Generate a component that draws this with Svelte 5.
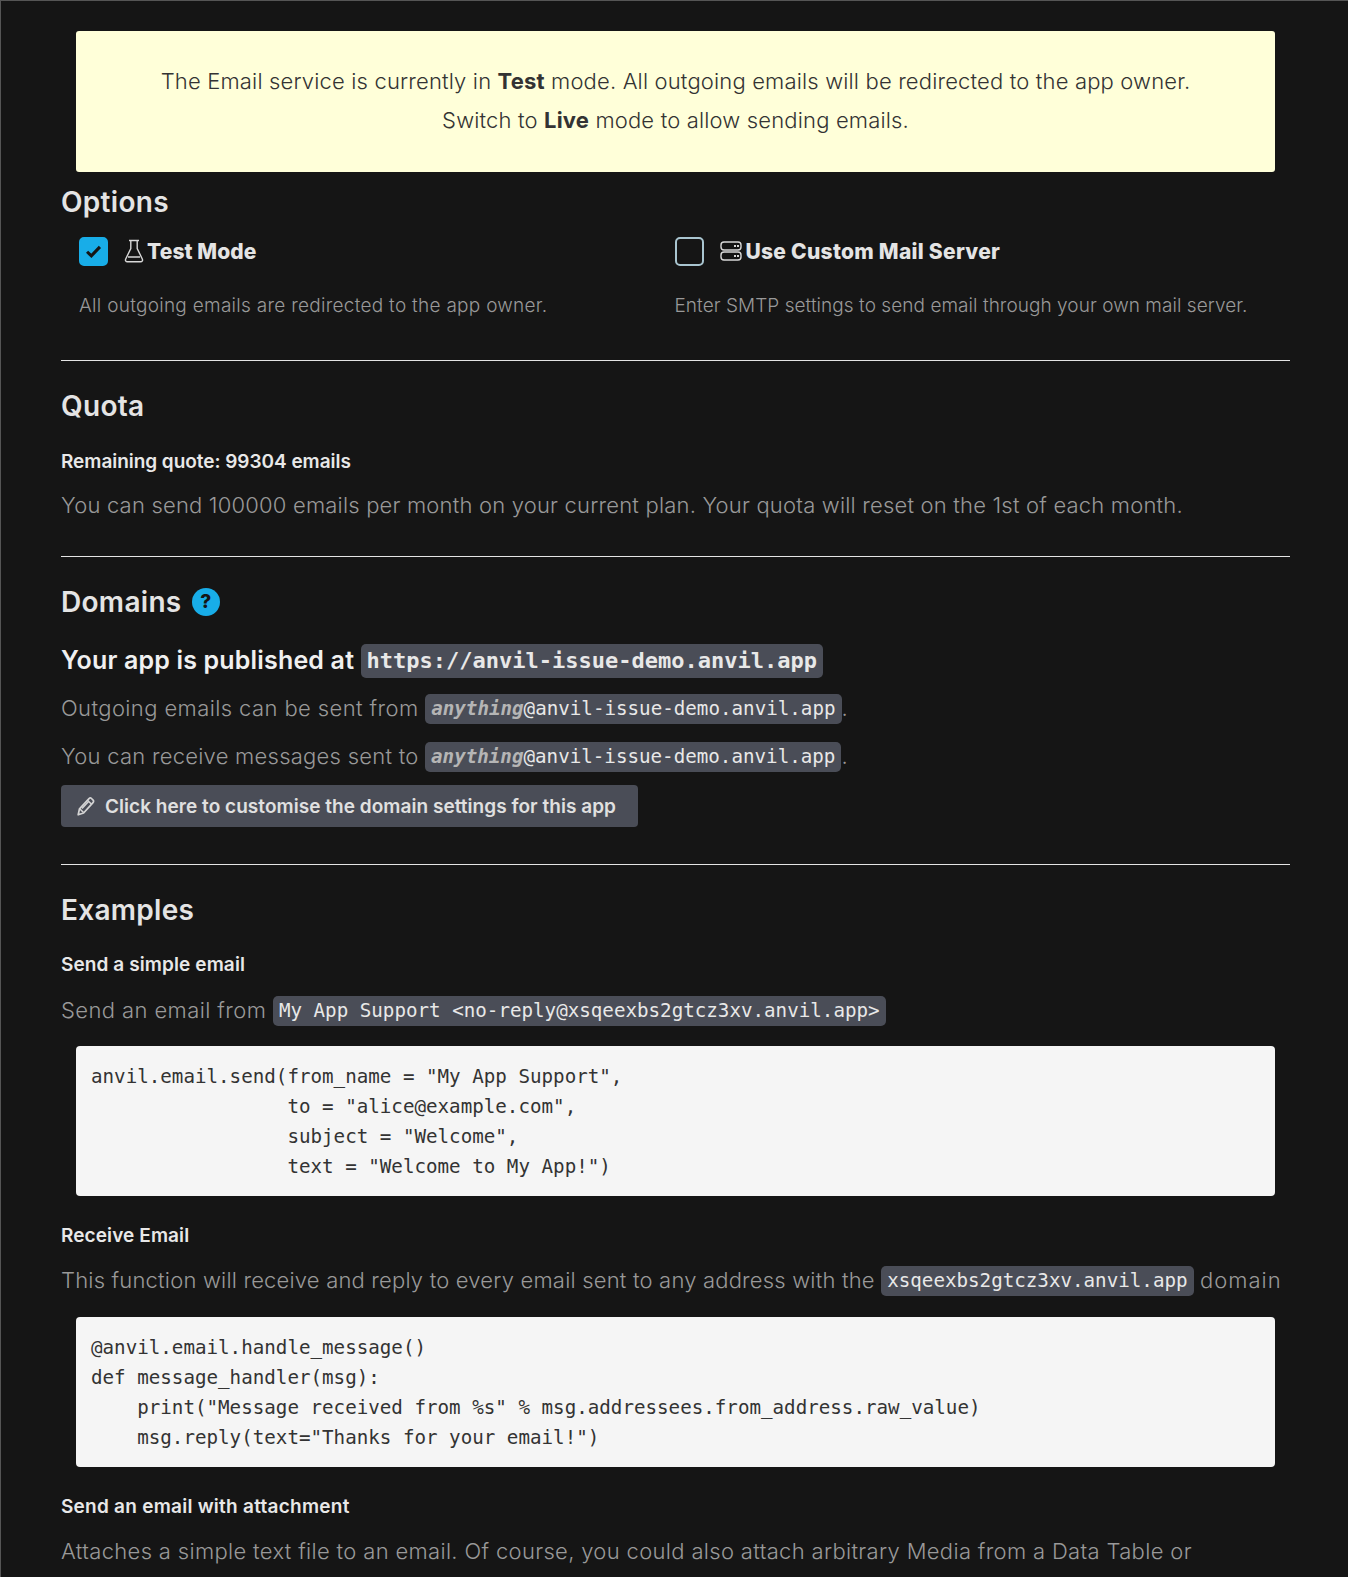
<script>
  let testMode = true;
  let customServer = false;
  const sendCode = `anvil.email.send(from_name = "My App Support",
                 to = "alice@example.com",
                 subject = "Welcome",
                 text = "Welcome to My App!")`;
  const receiveCode = `@anvil.email.handle_message()
def message_handler(msg):
    print("Message received from %s" % msg.addressees.from_address.raw_value)
    msg.reply(text="Thanks for your email!")`;
</script>

<main>
  <div class="alert">
    <p>The Email service is currently in <b>Test</b> mode. All outgoing emails will be redirected to the app owner.</p>
    <p>Switch to <b>Live</b> mode to allow sending emails.</p>
  </div>

  <section class="options">
    <h2 class="first">Options</h2>
    <div class="cols">
      <div class="col">
        <div class="opt">
          <span class="box" class:on={testMode}>
            <svg width="19" height="19" viewBox="0 0 16 16"><path d="M2.6 8.2l3.6 3.5 7.2-7.6" fill="none" stroke="#151515" stroke-width="2.6"/></svg>
          </span>
          <svg class="ic flask" width="20" height="24" viewBox="0 0 20 24"><path d="M5 1.5h10M6.8 1.5v8L1.7 20c-.7 1.5.1 2.8 1.7 2.800h13.200c1.600 0 2.400-1.300 1.700-2.800L13.200 9.500v-8M4 18h12" fill="none" stroke="#d8d8d8" stroke-width="1.4"/></svg>
          <span class="optname test">Test Mode</span>
        </div>
        <p class="desc wide">All outgoing emails are redirected to the app owner.</p>
      </div>
      <div class="col">
        <div class="opt">
          <span class="box" class:on={customServer}></span>
          <svg class="ic server" width="22" height="20" viewBox="0 0 22 20"><g fill="none" stroke="#d8d8d8" stroke-width="1.4"><rect x="1" y="1" width="20" height="8" rx="3"/><rect x="1" y="11" width="20" height="8" rx="3"/></g><path d="M14 4h2v2h-2zM17 4h2v2h-2zM14 14h2v2h-2zM17 14h2v2h-2z" fill="#d8d8d8"/></svg>
          <span class="optname">Use Custom Mail Server</span>
        </div>
        <p class="desc">Enter SMTP settings to send email through your own mail server.</p>
      </div>
    </div>
  </section>

  <hr />

  <section>
    <h2>Quota</h2>
    <h4 class="remaining">Remaining quote: 99304 emails</h4>
    <p class="txt quota">You can send 100000 emails per month on your current plan. Your quota will reset on the 1st of each month.</p>
  </section>

  <hr class="h2" />

  <section>
    <h2>Domains <span class="help">?</span></h2>
    <h3>Your app is published at <code class="big">https://anvil-issue-demo.anvil.app</code></h3>
    <p class="txt out">Outgoing emails can be sent from <code><i>anything</i>@anvil-issue-demo.anvil.app</code>.</p>
    <p class="txt recv">You can receive messages sent to <code><i>anything</i>@anvil-issue-demo.anvil.app</code>.</p>
    <button>
      <svg width="18" height="20" viewBox="0 0 18 20"><path d="M1.200 18.800l1.300-6L12 2.600c.8-.8 1.800-.8 2.500-.1l1.600 1.600c.7.700.7 1.700-.1 2.500L6.600 17z" fill="none" stroke="#d4d4d4" stroke-width="1.700" stroke-linejoin="round"/><path d="M10.500 4.200l4.300 4.300M3 13l3.500 3.500M5 12.500l7-7.500" fill="none" stroke="#d4d4d4" stroke-width="1.500"/></svg>
      <span>Click here to customise the domain settings for this app</span>
    </button>
  </section>

  <hr class="h3" />

  <section>
    <h2>Examples</h2>
    <h4 class="simple">Send a simple email</h4>
    <p class="txt from">Send an email from <code>My App Support &lt;no-reply@xsqeexbs2gtcz3xv.anvil.app&gt;</code></p>
    <pre>{sendCode}</pre>
    <h4 class="after">Receive Email</h4>
    <p class="txt fn">This function will receive and reply to every email sent to any address with the <code>xsqeexbs2gtcz3xv.anvil.app</code> <span class="dom">domain</span></p>
    <pre class="second">{receiveCode}</pre>
    <h4 class="after attach">Send an email with attachment</h4>
    <p class="txt last">Attaches a simple text file to an email. Of course, you could also attach arbitrary Media from a Data Table or</p>
  </section>
</main>

<style>
  :global(body) {
    background: #151515;
    font-family: Inter, "Open Sans", sans-serif;
  }
  main {
    box-sizing: border-box;
    height: 1577px;
    overflow: hidden;
    padding: 30px 58px 0 60px;
    border-top: 1px solid #555;
    border-left: 1px solid #555;
    background: #151515;
  }
  .alert {
    margin: 0 15px;
    height: 141px;
    box-sizing: border-box;
    padding: 31px 15px 0;
    background: #ffffd9;
    border-radius: 3px;
    color: #333;
    text-align: center;
    font-size: 22px;
    font-weight: 300;
    letter-spacing: .16px;
    line-height: 39px;
  }
  .alert p { margin: 0; }
  .alert b { font-weight: 700; }
  h2 {
    margin: 0;
    color: #e4e4e4;
    font-size: 28px;
    font-weight: 600;
    letter-spacing: .3px;
    line-height: 36px;
  }
  h2.first { margin-top: 12px; }
  .cols { display: flex; }
  .col { width: 50%; padding-left: 18px; box-sizing: border-box; }
  .col + .col { padding-left: 0; margin-left: -1px; }
  .opt {
    display: flex;
    align-items: center;
    height: 30px;
    margin-top: 16px;
  }
  .box {
    box-sizing: border-box;
    width: 29px;
    height: 29px;
    border: 2px solid #a9c5d0;
    border-radius: 5px;
    display: flex;
    align-items: center;
    justify-content: center;
  }
  .box.on { background: #18ade8; border-color: #18ade8; }
  .ic { margin-left: 16px; margin-right: 4px; }
  .optname {
    color: #e4e4e4;
    font-size: 21px;
    font-weight: 800;
    letter-spacing: .27px;
  }
  .optname.test { letter-spacing: .1px; margin-left: -1px; }
  .desc {
    margin: 26px 0 0;
    color: #999;
    font-size: 19px;
    font-weight: 300;
    letter-spacing: .05px;
    line-height: 28px;
    white-space: nowrap;
  }
  .desc.wide { letter-spacing: .28px; }
  hr {
    border: 0;
    border-top: 1px solid #e4e4e4;
    margin: 40px 0 0;
  }
  hr.h2 { margin-top: 35px; }
  hr.h3 { margin-top: 37px; }
  section h2:not(.first) { margin-top: 27px; }
  h4 {
    margin: 0;
    color: #e8e8e8;
    font-size: 19px;
    font-weight: 600;
    letter-spacing: .1px;
    line-height: 30px;
  }
  h4.remaining { margin-top: 23px; letter-spacing: -.04px; }
  h4.simple { margin-top: 22px; }
  h4.after { margin-top: 25px; }
  h4.attach { letter-spacing: .25px; }
  .txt {
    margin: 0;
    color: #999;
    font-size: 22px;
    font-weight: 300;
    line-height: 32px;
    white-space: nowrap;
  }
  .quota { margin-top: 12px; letter-spacing: .19px; }
  .out { margin-top: 14px; letter-spacing: .4px; }
  .recv { margin-top: 16px; letter-spacing: .25px; }
  .from { margin-top: 14px; letter-spacing: .4px; }
  .fn { margin-top: 13px; letter-spacing: .19px; }
  .dom { letter-spacing: 1px; }
  .last { margin-top: 13px; letter-spacing: .33px; }
  .help {
    display: inline-block;
    width: 28px;
    height: 28px;
    border-radius: 50%;
    background: #18ade8;
    color: #151515;
    font-size: 19px;
    font-weight: 800;
    letter-spacing: 0;
    line-height: 28px;
    text-align: center;
    vertical-align: 4px;
    margin-left: 3px;
  }
  h3 {
    margin: 22px 0 0;
    color: #f0f0f0;
    font-size: 25px;
    font-weight: 600;
    letter-spacing: .17px;
    line-height: 36px;
  }
  code {
    display: inline-block;
    background: #4a4d57;
    color: #e8e8e8;
    border-radius: 5px;
    padding: 0 6px;
    font-family: "DejaVu Sans Mono", monospace;
    font-size: 19.2px;
    letter-spacing: 0;
    line-height: 30px;
    vertical-align: 1px;
  }
  code.big { font-size: 22px; font-weight: 700; line-height: 34px; }
  code i { color: #b5b5b5; font-weight: 700; }
  button {
    display: flex;
    align-items: center;
    gap: 10px;
    height: 42px;
    margin-top: 13px;
    padding: 0 22px 0 16px;
    border: 0;
    border-radius: 4px;
    background: #4a4d57;
    color: #e0e0e0;
    font-family: inherit;
    font-size: 19px;
    font-weight: 600;
    letter-spacing: .04px;
  }
  pre {
    margin: 20px 15px 0;
    padding: 16px 15px 14px;
    height: 150px;
    box-sizing: border-box;
    background: #f5f5f5;
    color: #333;
    border-radius: 4px;
    font-family: "DejaVu Sans Mono", monospace;
    font-size: 19.2px;
    line-height: 30px;
  }
  pre.second { margin-top: 21px; }
</style>
